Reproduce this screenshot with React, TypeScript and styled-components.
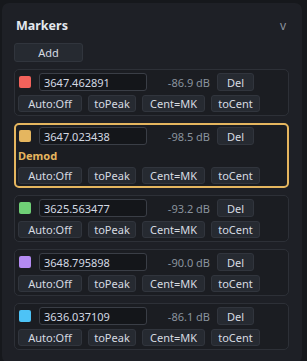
import React from 'react';
import styled, { createGlobalStyle, css } from 'styled-components';

const GlobalStyle = createGlobalStyle`
  html, body {
    margin: 0;
    padding: 0;
    background: #16181c;
    font-family: 'Noto Sans', 'Open Sans', sans-serif;
  }
`;

const Panel = styled.section`
  margin: 3px 5px 0 2px;
  padding: 10px 13px 12px 12px;
  background: #1e2026;
  border-radius: 7px;
  min-height: 360px;
  box-sizing: border-box;
`;

const Header = styled.div`
  display: flex;
  align-items: center;
  justify-content: space-between;
  height: 24px;
  padding: 0 2px;
`;

const Title = styled.h2`
  margin: 0;
  font-size: 12.5px;
  font-weight: 700;
  color: #e4e8ee;
`;

const Toggle = styled.span`
  font-size: 12px;
  color: #8c929c;
  padding-right: 1px;
`;

const Button = styled.button<{ $w?: number; $h?: number }>`
  display: flex;
  align-items: center;
  justify-content: center;
  flex: none;
  height: ${p => p.$h ?? 18}px;
  width: ${p => (p.$w ? `${p.$w}px` : 'auto')};
  padding: 0;
  background: #262a31;
  border: 1px solid #31353d;
  border-radius: 3px;
  color: #d7dbe2;
  font-family: inherit;
  font-size: 11px;
  line-height: 1;
  cursor: pointer;
`;

const AddRow = styled.div`
  display: flex;
  margin: 6px 0 7px 0;
`;

const List = styled.div`
  display: flex;
  flex-direction: column;
  gap: 7px;
`;

const Card = styled.div<{ $active?: boolean }>`
  display: flex;
  flex-direction: column;
  gap: 4px;
  padding: 3px;
  background: #1b1d22;
  border: 1px solid #2d3037;
  border-radius: 5px;
  ${p =>
    p.$active &&
    css`
      gap: 3px;
      padding: 2px;
      border: 2px solid #e5b65f;
    `}
`;

const TopRow = styled.div`
  display: flex;
  align-items: center;
  height: 18px;
  padding-right: 31px;
`;

const Swatch = styled.span<{ $color: string }>`
  width: 12px;
  height: 12px;
  border-radius: 2px;
  background: ${p => p.$color};
  margin: 0 8px 1px 1px;
  flex: none;
`;

const FreqInput = styled.input`
  width: 108px;
  height: 18px;
  box-sizing: border-box;
  padding: 0 4px;
  background: #14161a;
  border: 1px solid #3a3e46;
  border-radius: 3px;
  color: #d3d9e3;
  font-family: inherit;
  font-size: 11px;
  outline: none;
`;

const Level = styled.span`
  flex: 1;
  text-align: right;
  color: #8a939e;
  font-size: 11px;
  padding-right: 7px;
`;

const ButtonRow = styled.div`
  display: flex;
  gap: 6px;
`;

const DemodLabel = styled.div`
  color: #e5b65f;
  font-size: 11px;
  font-weight: 700;
  height: 16px;
  line-height: 16px;
`;

type Marker = { color: string; freq: string; level: string; active?: boolean };

const markers: Marker[] = [
  { color: '#f2625b', freq: '3647.462891', level: '-86.9 dB' },
  { color: '#e5b65f', freq: '3647.023438', level: '-98.5 dB', active: true },
  { color: '#6fcf76', freq: '3625.563477', level: '-93.2 dB' },
  { color: '#b48bf2', freq: '3648.795898', level: '-90.0 dB' },
  { color: '#4dc3f6', freq: '3636.037109', level: '-86.1 dB' },
];

function MarkerCard({ m }: { m: Marker }) {
  return (
    <Card $active={m.active}>
      <TopRow>
        <Swatch $color={m.color} />
        <FreqInput defaultValue={m.freq} />
        <Level>{m.level}</Level>
        <Button $w={37}>Del</Button>
      </TopRow>
      {m.active && <DemodLabel>Demod</DemodLabel>}
      <ButtonRow>
        <Button $w={64} $h={17}>Auto:Off</Button>
        <Button $w={48} $h={17}>toPeak</Button>
        <Button $w={63} $h={17}>Cent=MK</Button>
        <Button $w={49} $h={17}>toCent</Button>
      </ButtonRow>
    </Card>
  );
}

export default function App() {
  return (
    <>
      <GlobalStyle />
      <Panel>
        <Header>
          <Title>Markers</Title>
          <Toggle>v</Toggle>
        </Header>
        <AddRow>
          <Button $w={69} $h={19}>Add</Button>
        </AddRow>
        <List>
          {markers.map(m => (
            <MarkerCard key={m.freq} m={m} />
          ))}
        </List>
      </Panel>
    </>
  );
}
